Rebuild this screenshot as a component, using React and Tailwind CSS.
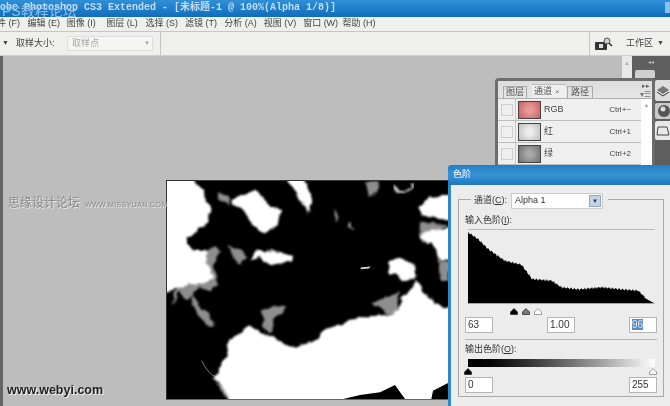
const menus = ["文件 (F)", "编辑 (E)", "图像 (I)", "图层 (L)", "选择 (S)", "滤镜 (T)", "分析 (A)", "视图 (V)", "窗口 (W)", "帮助 (H)"];

const channels = [
  { name: "RGB", key: "Ctrl+~", thumb: "bg-[radial-gradient(circle,#e79a98_20%,#c95f60_100%)]" },
  { name: "红", key: "Ctrl+1", thumb: "bg-[radial-gradient(circle,#ededed_20%,#bdbdbd_100%)]" },
  { name: "绿", key: "Ctrl+2", thumb: "bg-[radial-gradient(circle,#a8a8a8_20%,#707070_100%)]" },
];

// histogram outline, rough control points with some jitter on top
const curve = [[70, 215], [100, 235], [130, 265], [180, 300], [230, 312], [262, 355], [320, 360], [350, 380], [400, 386], [470, 380], [530, 386], [580, 390], [605, 415], [628, 428]];

function histogramPoints() {
  const pts = ["70,428"];
  for (let x = 70; x <= 628; x += 2) {
    const i = curve.findIndex((p) => p[0] >= x);
    const b = curve[Math.max(i, 1)];
    const a = curve[Math.max(i, 1) - 1];
    const y = a[1] + ((b[1] - a[1]) * (x - a[0])) / (b[0] - a[0]);
    const jitter = x > 600 ? 0 : Math.sin(x * 1.7) * 2.5 + Math.sin(x * 0.61) * 2;
    pts.push(`${x},${(y + jitter).toFixed(1)}`);
  }
  pts.push("628,428");
  return pts.join(" ");
}

function Marker({ fill, x }) {
  return (
    <svg className="absolute top-0" style={{ left: x }} width="8" height="7" viewBox="0 0 8 7">
      <path d="M4 .5 7.5 4v2.5h-7V4z" fill={fill} stroke={fill === "#fff" ? "#777" : "#222"} strokeWidth=".7" />
    </svg>
  );
}

function NumberBox({ value, selected, className }) {
  return (
    <div className={`h-[16px] bg-white border border-[#b5b5b5] pl-[2px] text-[10px] leading-[14px] text-[#333] ${className}`}>
      {selected ? <span className="bg-[#5d8ac4] text-[#d8e4f2]">{value}</span> : value}
    </div>
  );
}

function Document() {
  return (
    <div className="absolute left-[166px] top-[180px] w-[283px] h-[220px] bg-black border-l border-t border-[#333] border-b-[#666] border-b overflow-hidden">
      <svg className="block w-full h-full" viewBox="499 31 846 657" preserveAspectRatio="none">
        <defs>
          <filter id="cloud" x="-5%" y="-5%" width="110%" height="110%">
            <feTurbulence type="fractalNoise" baseFrequency="0.028" numOctaves="3" seed="4" result="noise" />
            <feDisplacementMap in="SourceGraphic" in2="noise" scale="26" xChannelSelector="R" yChannelSelector="G" />
            <feGaussianBlur stdDeviation="3" />
          </filter>
        </defs>
        <g fill="#8e8e8e" filter="url(#cloud)">
          <path d="M545 130l25 5 5 30-25 8zM545 210l40 40 50-20 20 20-20 40 20 50-30 25-20-10-30 15-15 15-20-20-20 40z" />
          <path d="M680 220l40 15 20 20-20 30zM1090 32h45l-5 30-25 15zM1110 400l60-25 30-10-15 70-30-5zM780 420l80-12-40 40-10 40-25-20zM570 370l30 40 45 50-10 12-40-30-20-40z" />
          <path d="M1310 260l35 20v50l-25 5zM655 70l25 5 10 30-25-10zM645 640l30 10 20 35-30-5zM1000 110l20 20-10 30zM1040 155l20 25-25-10zM1260 150l50 10 30 5-30 20-50 15z" />
        </g>
        <path
          fill="#fff"
          filter="url(#cloud)"
          d="M480 10h89q12 30 36 48l25 57-10 35-30 35-40 20 25 40 50-5-13 40 28 45-30 20-45 0-45 10-40 15zM640 625l30-55 20-60 55-45 35 25 40 10 60 35 50-15 50-45 80-25 60-15 60-5 65-105 55 80 65 10v260l-65 15-10 23h-75l-35-40-80 22-70 40H700l-20-60zM690 90l80-35 20 35 55 35-15 40-40 30-30-25-30-45zM850 10h55l27 60-7 55-25-40zM1365 75l-75 3-35 27 15 30 30 10 65 5zM1365 170l-75 10-35 20 35 20 20 40 55 20zM1165 280l35-18 30 8 18 50-38 10-40-20zM745 270l20-30 55 5 50 8 5 18-55 12-40-20z"
        />
        <path fill="none" stroke="#ddd" strokeWidth="6" filter="url(#cloud)" d="M1180 45c0 30 45 30 55-5" />
        <path fill="#d8d8d8" d="M1080 292l30-3-5 6-25 2z" />
        <path fill="none" stroke="#bbb" strokeWidth="2" d="M603 572q15 35 42 50" />
        <path fill="#000" d="M1028 688l50-12 60-8 45-22 30 42zM1292 688l5-25 48-25v50z" />
      </svg>
    </div>
  );
}

function ChannelsPanel() {
  return (
    <div className="absolute left-[492px] top-[22px] w-[160px] h-[90px] bg-[#efefef] border-[3px] border-b-0 border-[#6d6d6d] rounded-t-[4px] flex flex-col">
      <div className="h-[18px] shrink-0 flex items-end pl-[5px] bg-gradient-to-b from-[#dcdcdc] to-[#e6e6e6] border-b border-[#b0b0b0] text-[9px] text-[#555] relative">
        <div className="h-[12px] w-[24px] flex items-center justify-center border border-b-0 border-[#aaa] leading-none">图层</div>
        <div className="ml-[5px] h-[14px] w-[34px] flex items-center gap-[3px] pl-[2px] bg-[#efefef] border-t border-[#bbb] leading-none">
          通道<span className="text-[8px] text-[#777]">×</span>
        </div>
        <div className="ml-[1px] h-[12px] w-[26px] flex items-center justify-center border border-b-0 border-[#aaa] leading-none">路径</div>
        <span className="absolute right-[2px] top-[0px] text-[7px] leading-[9px] text-[#666]">▸▸</span>
        <span className="absolute right-[1px] top-[9px] text-[8px] leading-[9px] text-[#777]">▾☰</span>
      </div>
      <div className="flex flex-1 min-h-0">
        <div className="flex-1 min-w-0">
          {channels.map((c) => (
            <div key={c.name} className="h-[22px] flex items-center border-b border-[#bdbdbd]">
              <div className="w-[18px] h-full flex items-center justify-center border-r border-[#c8c8c8]">
                <div className="size-[12px] border border-[#cfcfcf]" />
              </div>
              <div className={`ml-[2px] w-[23px] h-[18px] border border-[#444] ${c.thumb}`} />
              <span className="ml-[3px] text-[9px] text-[#444]">{c.name}</span>
              <span className="ml-auto mr-[10px] text-[8px] text-[#444]">{c.key}</span>
            </div>
          ))}
        </div>
        <div className="w-[11px] bg-white flex justify-center">
          <span className="text-[6px] leading-[12px] text-[#aaa]">▲</span>
        </div>
      </div>
    </div>
  );
}

function Dock() {
  return (
    <div className="absolute right-0 top-0 bottom-0 w-[48px] flex">
      <div className="w-[10px] h-[24px] bg-[#e9e9e9] flex justify-center">
        <span className="text-[6px] leading-[14px] text-[#aaa]">▲</span>
      </div>
      <div className="relative flex-1 h-[120px] bg-[#5e5e5e] flex flex-col items-end">
        <div className="w-full h-[12px] flex items-center justify-center text-[6px] text-[#bbb]">◂◂</div>
        <div className="absolute left-[3px] top-[14px] w-[20px] h-[8px] bg-[#cfcfcf] rounded-t-[2px]" />
        <div className="w-[15px] mt-[12px] h-[21px] bg-[#dedede] flex items-center justify-center rounded-l-[2px]">
          <svg width="14" height="12" viewBox="0 0 14 12"><path d="M7 1l6 4-6 4-6-4z" fill="#777" /><path d="M1 7l6 4 6-4" fill="none" stroke="#333" /></svg>
        </div>
        <div className="w-[15px] mt-[2px] h-[16px] bg-[#c9c9c9] flex items-center justify-center rounded-l-[2px]">
          <svg width="14" height="14" viewBox="0 0 14 14"><circle cx="8" cy="7" r="6" fill="#555" /><circle cx="7" cy="5" r="2.5" fill="#ddd" /></svg>
        </div>
        <div className="w-[15px] mt-[2px] h-[19px] bg-[#e8e8e8] flex items-center justify-center rounded-l-[2px]">
          <svg width="14" height="14" viewBox="0 0 14 14"><path d="M2 3h9l2 8H1z" fill="none" stroke="#444" /></svg>
        </div>
      </div>
    </div>
  );
}

function LevelsDialog() {
  return (
    <div className="absolute left-[448px] top-[165px] w-[222px] h-[241px] flex flex-col bg-[#ececec] border-l-[3px] border-[#2f86c8] rounded-tl-[4px] text-[#333] text-[9px]">
      <div className="h-[20px] shrink-0 -ml-[3px] pl-[5px] flex items-center rounded-tl-[4px] bg-gradient-to-b from-[#1f7fc8] via-[#3a92d4] to-[#1c78c2] text-white text-[9px]">
        色阶
      </div>
      <div className="relative mt-[14px] ml-[7px] w-[206px] h-[198px] border border-[#a9a9a9] px-[6px]">
        <div className="absolute left-[12px] -top-[7px] w-[137px] flex items-center gap-[4px] bg-[#ececec] pl-[3px] whitespace-nowrap">
          <span className="w-[33px] shrink-0">通道(<u>C</u>):</span>
          <div className="w-[92px] h-[16px] shrink-0 bg-white border border-[#ccc] flex items-center justify-between pl-[3px] pr-[1px]">
            Alpha 1
            <span className="size-[12px] bg-[#c4d4e6] border border-[#8fa8c4] flex items-center justify-center text-[6px] text-[#234]">▼</span>
          </div>
        </div>
        <div className="mt-[13px] leading-[14px]">输入色阶(<u>I</u>):</div>
        <div className="ml-[3px] mt-[2px] w-[187px] border-t border-[#bbb]">
          <svg className="block" width="187" height="74" viewBox="70 208 560 222" preserveAspectRatio="none">
            <polygon points={histogramPoints()} fill="#000" />
            <line x1="70" y1="429" x2="630" y2="429" stroke="#999" strokeWidth="2" />
          </svg>
        </div>
        <div className="relative h-[7px] mt-[4px]">
          <Marker fill="#000" x={45} />
          <Marker fill="#777" x={57} />
          <Marker fill="#fff" x={69} />
        </div>
        <div className="flex justify-between mt-[2px]">
          <NumberBox value="63" className="w-[28px]" />
          <NumberBox value="1.00" className="w-[28px]" />
          <NumberBox value="96" selected className="w-[28px]" />
        </div>
        <div className="mt-[6px] border-t border-[#b5b5b5]" />
        <div className="mt-[2px] leading-[14px]">输出色阶(<u>O</u>):</div>
        <div className="ml-[3px] mt-[3px] w-[187px] h-[8px] bg-gradient-to-r from-black to-white" />
        <div className="relative h-[7px] mt-[1px]">
          <Marker fill="#000" x={-1} />
          <Marker fill="#fff" x={184} />
        </div>
        <div className="flex justify-between mt-[2px]">
          <NumberBox value="0" className="w-[28px]" />
          <NumberBox value="255" className="w-[28px]" />
        </div>
      </div>
    </div>
  );
}

export default function App() {
  return (
    <div className="relative w-[670px] h-[406px] overflow-hidden flex flex-col bg-[#bdbdbd] font-['Liberation_Sans','Noto_Sans_CJK_SC',sans-serif] blur-[0.3px]">
      <div className="relative h-[17px] shrink-0 overflow-hidden bg-gradient-to-b from-[#2f8fd8] via-[#1f7fcb] to-[#0f6cb8] text-[#c4dcf0] text-[10px] font-['Liberation_Mono','Noto_Sans_CJK_SC',monospace] font-bold whitespace-nowrap leading-[15px] -indent-[12px]">
        Adobe Photoshop CS3 Extended - [未标题-1 @ 100%(Alpha 1/8)]
        <span className="absolute left-[2px] top-[4px] indent-0 text-[14px] leading-[15px] font-normal text-[#8cc0ea] font-['Liberation_Sans','Noto_Sans_CJK_SC',sans-serif]">PS教程论坛</span>
        <span className="absolute right-0 top-[2px] w-[5px] h-[11px] bg-[#8cc0ea]" />
      </div>
      <div className="h-[15px] shrink-0 flex items-center bg-[#efefec] border-b border-[#c5c5c5] text-[9px] text-[#444] whitespace-nowrap">
        {menus.map((m, i) => (
          <span key={m} className={`w-[39.4px] shrink-0 ${i === 0 ? "-ml-[12px]" : ""}`}>{m}</span>
        ))}
      </div>
      <div className="h-[24px] shrink-0 flex items-center bg-[#efefec] border-b border-[#cfcfcf] text-[9px] text-[#444]">
        <span className="w-[16px] pl-[2px] text-[7px]">▼</span>
        <span className="w-[39px]">取样大小:</span>
        <div className="ml-[12px] w-[86px] h-[15px] bg-[#f5f5f3] border border-[#ddd] flex items-center justify-between pl-[4px] pr-[2px] text-[#a8a8a8]">
          取样点
          <span className="text-[6px]">▼</span>
        </div>
        <div className="ml-[7px] h-full border-l border-[#c5c5c5]" />
        <div className="ml-auto h-full border-l border-[#c5c5c5] flex items-center">
          <svg className="ml-[5px]" width="18" height="14" viewBox="0 0 18 14">
            <rect x="0" y="5" width="12" height="8" rx="1" fill="#333" />
            <rect x="4" y="7" width="4" height="4" fill="#ddd" />
            <circle cx="12" cy="4" r="3" fill="#ccc" stroke="#555" />
            <line x1="14" y1="6" x2="17" y2="9" stroke="#333" strokeWidth="1.5" />
          </svg>
          <span className="ml-[13px] mr-[4px] text-[9px]">工作区</span>
          <span className="mr-[6px] text-[7px]">▼</span>
        </div>
      </div>
      <div className="relative flex-1 border-l-[3px] border-[#666]">
        <Dock />
        <ChannelsPanel />
      </div>
      <Document />
      <div className="absolute left-[8px] top-[194px] flex items-baseline gap-[5px] text-[#8a8a8a] whitespace-nowrap [text-shadow:1px_1px_0_#e8e8e8]">
        <span className="text-[12px]">思缘设计论坛</span>
        <span className="text-[7px] tracking-[0.4px]">WWW.MISSYUAN.COM</span>
      </div>
      <div className="absolute left-[7px] top-[382px] text-[12.5px] leading-[16px] font-bold text-[#222] [text-shadow:1px_1px_0_#f2f2f2]">www.webyi.com</div>
      <LevelsDialog />
    </div>
  );
}
